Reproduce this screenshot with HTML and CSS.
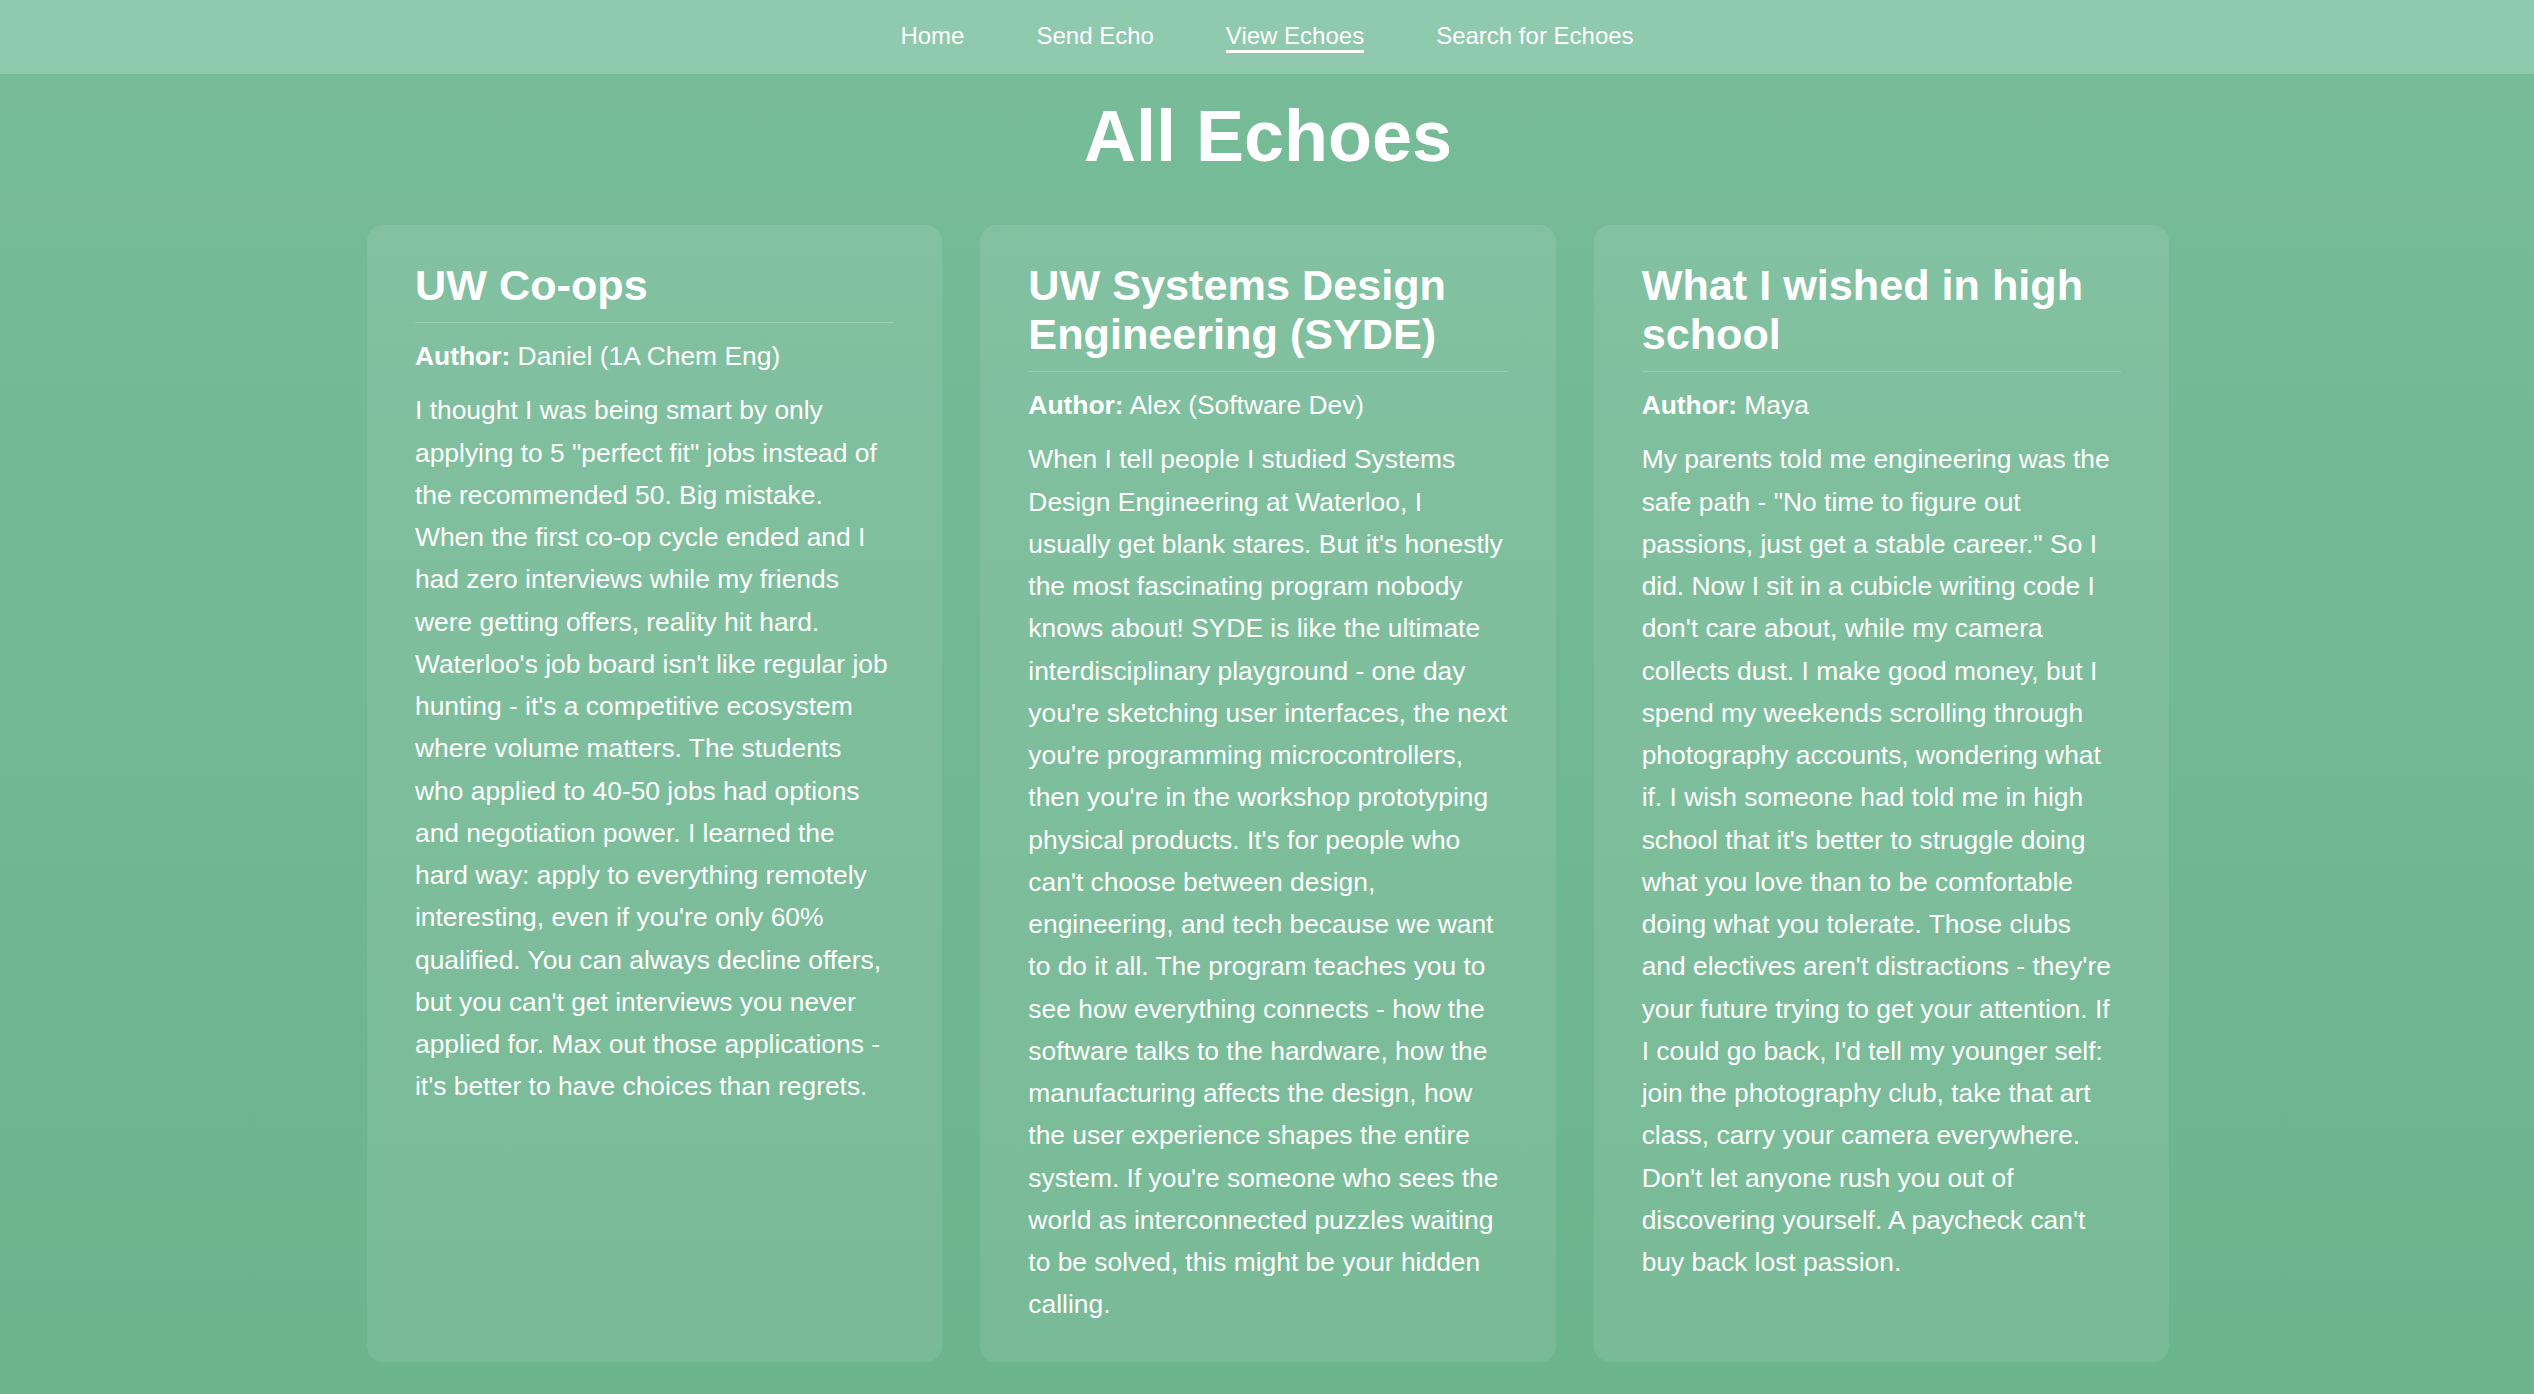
FILE: index.html
```html
<!DOCTYPE html>
<html lang="en">
<head>
<meta charset="utf-8">
<title>All Echoes</title>
<link rel="stylesheet" href="styles.css">
</head>
<body>
<nav class="nav">
  <a class="nav-link" href="#">Home</a>
  <a class="nav-link" href="#">Send Echo</a>
  <a class="nav-link active" href="#">View Echoes</a>
  <a class="nav-link" href="#">Search for Echoes</a>
</nav>
<main class="main">
  <h1 class="page-title">All Echoes</h1>
  <section class="grid">
    <article class="card">
      <h2 class="card-title">UW Co-ops</h2>
      <p class="author"><strong>Author:</strong> Daniel (1A Chem Eng)</p>
      <p class="body">I thought I was being smart by only applying to 5 "perfect fit" jobs instead of the recommended 50. Big mistake. When the first co-op cycle ended and I had zero interviews while my friends were getting offers, reality hit hard. Waterloo's job board isn't like regular job hunting - it's a competitive ecosystem where volume matters. The students who applied to 40-50 jobs had options and negotiation power. I learned the hard way: apply to everything remotely interesting, even if you're only 60% qualified. You can always decline offers, but you can't get interviews you never applied for. Max out those applications - it's better to have choices than regrets.</p>
    </article>
    <article class="card">
      <h2 class="card-title">UW Systems Design Engineering (SYDE)</h2>
      <p class="author"><strong>Author:</strong> Alex (Software Dev)</p>
      <p class="body">When I tell people I studied Systems Design Engineering at Waterloo, I usually get blank stares. But it's honestly the most fascinating program nobody knows about! SYDE is like the ultimate interdisciplinary playground - one day you're sketching user interfaces, the next you're programming microcontrollers, then you're in the workshop prototyping physical products. It's for people who can't choose between design, engineering, and tech because we want to do it all. The program teaches you to see how everything connects - how the software talks to the hardware, how the manufacturing affects the design, how the user experience shapes the entire system. If you're someone who sees the world as interconnected puzzles waiting to be solved, this might be your hidden calling.</p>
    </article>
    <article class="card">
      <h2 class="card-title">What I wished in high school</h2>
      <p class="author"><strong>Author:</strong> Maya</p>
      <p class="body">My parents told me engineering was the safe path - "No time to figure out passions, just get a stable career." So I did. Now I sit in a cubicle writing code I don't care about, while my camera collects dust. I make good money, but I spend my weekends scrolling through photography accounts, wondering what if. I wish someone had told me in high school that it's better to struggle doing what you love than to be comfortable doing what you tolerate. Those clubs and electives aren't distractions - they're your future trying to get your attention. If I could go back, I'd tell my younger self: join the photography club, take that art class, carry your camera everywhere. Don't let anyone rush you out of discovering yourself. A paycheck can't buy back lost passion.</p>
    </article>
  </section>
</main>
</body>
</html>
```

FILE: styles.css
```css
html, body {
  margin: 0;
  padding: 0;
}

body {
  min-height: 100vh;
  font-family: "Liberation Sans", Arial, sans-serif;
  color: #ffffff;
  background: linear-gradient(180deg, #78bc9a 0%, #6bb48c 100%);
}

.nav {
  height: 74px;
  display: flex;
  justify-content: center;
  align-items: center;
  gap: 72px;
  background: #8fc9ae;
}

.nav-link {
  color: #ffffff;
  text-decoration: none;
  font-size: 24px;
  line-height: normal;
  border-bottom: 3px solid transparent;
}

.nav-link.active {
  border-bottom-color: #ffffff;
}

.main {
  max-width: 1802px;
  margin: 0 auto;
  padding: 0 0 33px 2px;
}

.page-title {
  margin: 21px 0 48px;
  text-align: center;
  font-size: 72px;
  font-weight: 700;
  line-height: normal;
}

.grid {
  display: grid;
  grid-template-columns: repeat(3, 1fr);
  gap: 38px;
  align-items: stretch;
}

.card {
  background: rgba(255, 255, 255, 0.09);
  border-radius: 16px;
  padding: 36px 48px 36px;
}

.card-title {
  margin: 0 0 12px;
  padding-bottom: 12px;
  border-bottom: 1px solid rgba(255, 255, 255, 0.2);
  font-size: 43.2px;
  font-weight: 700;
  line-height: normal;
}

.author {
  margin: 0 0 12px;
  font-size: 26.4px;
  line-height: 1.6;
}

.body {
  margin: 0;
  font-size: 26.4px;
  line-height: 1.6;
}
```
